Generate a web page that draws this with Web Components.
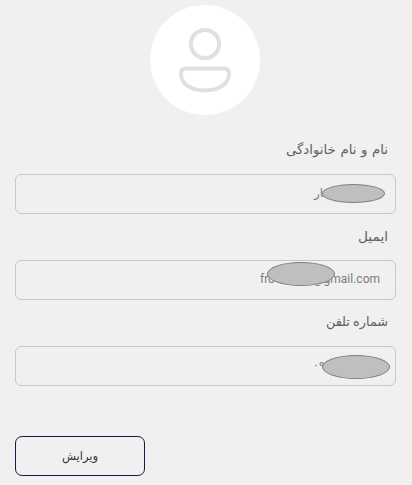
<!DOCTYPE html>
<html lang="fa" dir="rtl">
<head>
<meta charset="utf-8">
<title>پروفایل</title>
<style>
  body {
    margin: 0;
    background: #f0f0f0;
    font-family: Roboto, "DejaVu Sans", sans-serif;
  }
</style>
</head>
<body>
<profile-page></profile-page>

<template id="page-template">
  <style>
    :host {
      display: flex;
      flex-direction: column;
      box-sizing: border-box;
      height: 485px;
      padding: 5px 16px 9px 15px;
      overflow: hidden;
    }
    user-avatar { align-self: center; margin-left: -1px; }
    .fields {
      display: flex;
      flex-direction: column;
      gap: 6px;
      margin-top: 19px;
    }
    .name {
      --label-size: 13.3px;
      --label-spacing: 1.3px;
      --mask-right: 10px; --mask-top: 9px; --mask-w: 63px; --mask-h: 19px;
      --value-w: 66px;
      --value-size: 12px;
      --value-shift: 2px;
    }
    .email {
      --label-size: 13.7px;
      --mask-right: 60px; --mask-top: 1px; --mask-w: 68px; --mask-h: 24px;
      --value-w: 120px;
      --value-size: 12px;
      --value-shift: 2px;
    }
    .phone {
      --label-size: 12.8px;
      --mask-right: 5px; --mask-top: 8px; --mask-w: 68px; --mask-h: 24px;
      --value-w: 67px;
      --value-size: 11px;
    }
    outline-button { align-self: flex-end; margin-top: auto; }
  </style>
  <user-avatar></user-avatar>
  <div class="fields">
    <profile-field class="name">
      <span slot="label">نام و نام خانوادگی</span>
      <span slot="value">&zwj;ار</span>
    </profile-field>
    <profile-field class="email">
      <span slot="label">ایمیل</span>
      <span slot="value">fro</span>
      <span slot="value">@gmail.com</span>
    </profile-field>
    <profile-field class="phone">
      <span slot="label">شماره تلفن</span>
      <span slot="value">۰۹</span>
    </profile-field>
  </div>
  <outline-button>ویرایش</outline-button>
</template>

<template id="avatar-template">
  <style>
    :host {
      display: flex;
      width: 110px;
      height: 110px;
      border-radius: 50%;
      background: #fff;
    }
    svg { width: 110px; height: 110px; }
  </style>
  <svg viewBox="0 0 110 110" fill="none" stroke="#e0e0e0" stroke-width="4">
    <circle cx="55" cy="39" r="14.1"/>
    <path d="M36 63.500H74Q79 63.500 79 68.500C79 79 69 85.500 55 85.500S31 79 31 68.500Q31 63.500 36 63.500Z"/>
  </svg>
</template>

<template id="field-template">
  <style>
    :host { display: block; }
    .label {
      height: 40px;
      line-height: 32px;
      padding-right: 8px;
      font-size: var(--label-size, 13px);
      word-spacing: var(--label-spacing, 0);
      color: #606060;
      white-space: nowrap;
    }
    .box {
      position: relative;
      display: flex;
      align-items: center;
      box-sizing: border-box;
      height: 40px;
      padding: 0 15px;
      border: 1px solid #c8c8c8;
      border-radius: 6px;
    }
    .value {
      display: flex;
      justify-content: space-between;
      direction: ltr;
      width: var(--value-w);
      padding-bottom: var(--value-shift, 0);
      font-size: var(--value-size, 11px);
      line-height: 20px;
      color: #7c7c7c;
      white-space: nowrap;
    }
    /* covers the private part of the value */
    .mask {
      position: absolute;
      right: var(--mask-right);
      top: var(--mask-top);
      width: var(--mask-w);
      height: var(--mask-h);
      box-sizing: border-box;
      border: 1px solid #7f7f7f;
      border-radius: 50%;
      background: #bfbfbf;
    }
  </style>
  <div class="label"><slot name="label"></slot></div>
  <div class="box">
    <div class="value"><slot name="value"></slot></div>
    <div class="mask"></div>
  </div>
</template>

<template id="button-template">
  <style>
    :host { display: block; }
    button {
      display: block;
      width: 130px;
      height: 40px;
      padding: 0;
      border: 1px solid #1c1848;
      border-radius: 7px;
      background: transparent;
      color: #333;
      font: 11.5px/38px Roboto, "DejaVu Sans", sans-serif;
    }
  </style>
  <button type="button"><slot></slot></button>
</template>

<script>
  function define(name, templateId) {
    customElements.define(name, class extends HTMLElement {
      constructor() {
        super();
        const root = this.attachShadow({ mode: 'open' });
        root.appendChild(document.getElementById(templateId).content.cloneNode(true));
      }
    });
  }

  define('user-avatar', 'avatar-template');
  define('profile-field', 'field-template');
  define('outline-button', 'button-template');
  define('profile-page', 'page-template');
</script>
</body>
</html>
